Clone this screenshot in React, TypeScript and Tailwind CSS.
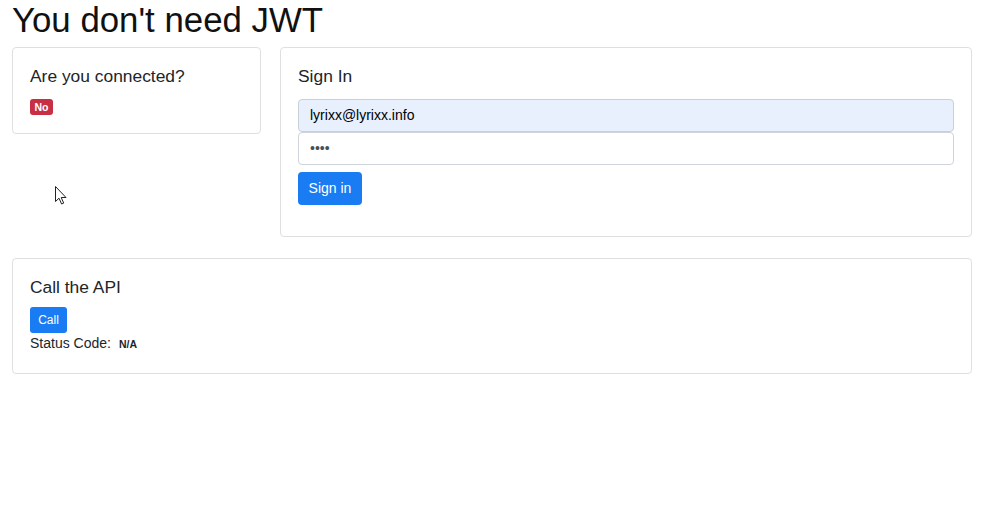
import React from "react";

export default function App() {
  return (
    <div
      className="relative w-[996px] h-[522px] bg-white text-[#212529] pl-[12px] pr-[24px]"
      style={{ fontFamily: '"Liberation Sans", Arial, sans-serif' }}
    >
      <h1 className="text-[34.8px] leading-[39px] text-[#111] font-normal mb-[8px]">
        You don't need JWT
      </h1>

      <div className="flex items-start gap-[19px]">
        <div className="w-[249px] border border-[#dfdfdf] rounded-[4px] px-[17px] pt-[17px] pb-[17px]">
          <h5 className="text-[17.4px] leading-[20px] pt-[1px] mb-[13px]">Are you connected?</h5>
          <div className="h-[17px] flex items-start">
            <span className="inline-flex items-center justify-center h-[16px] w-[23px] rounded-[3px] bg-[#c82f42] text-white text-[10.5px] font-bold leading-none">
              No
            </span>
          </div>
        </div>

        <div className="flex-1 border border-[#dfdfdf] rounded-[4px] px-[17px] pt-[17px] pb-[31px]">
          <h5 className="text-[17.4px] leading-[20px] pt-[1px] mb-[13px]">Sign In</h5>
          <div className="h-[33px] border border-[#c9d0d8] rounded-[4px] bg-[#e8f0fe] flex items-center px-[11px] text-[14px] text-black">
            lyrixx@lyrixx.info
          </div>
          <div className="h-[33px] border border-[#ced4da] rounded-[4px] bg-white flex items-center px-[11px] text-[14px] text-[#495057]">
            ••••
          </div>
          <button className="mt-[7px] w-[64px] h-[33px] rounded-[4px] bg-[#1a7cf2] text-white text-[14px] flex items-center justify-center">
            Sign in
          </button>
        </div>
      </div>

      <div className="mt-[21px] border border-[#dfdfdf] rounded-[4px] px-[17px] pt-[17px] pb-[19px]">
        <h5 className="text-[17.4px] leading-[20px] pt-[1px] mb-[10px]">Call the API</h5>
        <button className="w-[37px] h-[26px] rounded-[3px] bg-[#1a7cf2] text-white text-[12px] flex items-center justify-center">
          Call
        </button>
        <div className="text-[14px] leading-[20px] flex items-baseline">
          <span>Status Code:</span>
          <span className="ml-[8px] text-[10.5px] font-bold">N/A</span>
        </div>
      </div>

      <svg
        className="absolute left-[55px] top-[186px]"
        width="13"
        height="20"
        viewBox="0 0 13 20"
      >
        <path
          d="M0.5 0.5 L0.5 15.5 L4 12.2 L6.6 18 L8.7 17.1 L6.2 11.5 L11 11.5 Z"
          fill="white"
          stroke="#222"
          strokeWidth="1"
          strokeLinejoin="round"
        />
      </svg>
    </div>
  );
}
